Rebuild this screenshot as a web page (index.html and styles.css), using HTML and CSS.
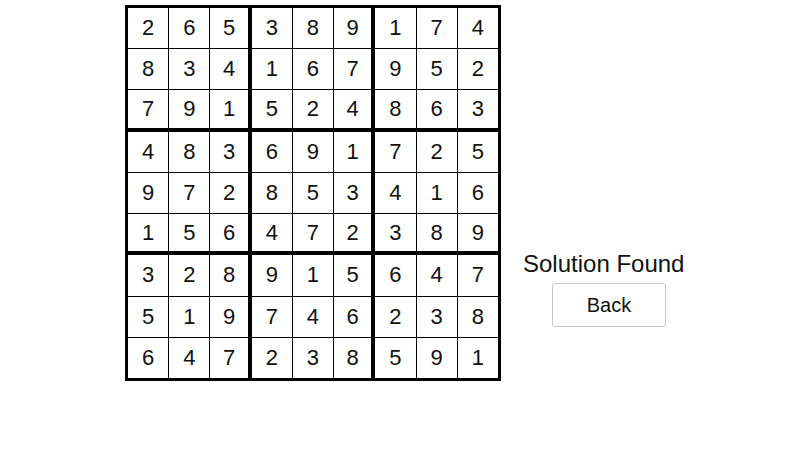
FILE: index.html
```html
<!DOCTYPE html>
<html>
<head>
<meta charset="utf-8">
<link rel="stylesheet" href="styles.css">
</head>
<body>
<div class="page">
  <div class="board">
    <div class="cell">2</div><div class="cell">6</div><div class="cell">5</div><div class="cell">3</div><div class="cell">8</div><div class="cell">9</div><div class="cell">1</div><div class="cell">7</div><div class="cell">4</div>
    <div class="cell">8</div><div class="cell">3</div><div class="cell">4</div><div class="cell">1</div><div class="cell">6</div><div class="cell">7</div><div class="cell">9</div><div class="cell">5</div><div class="cell">2</div>
    <div class="cell">7</div><div class="cell">9</div><div class="cell">1</div><div class="cell">5</div><div class="cell">2</div><div class="cell">4</div><div class="cell">8</div><div class="cell">6</div><div class="cell">3</div>
    <div class="cell">4</div><div class="cell">8</div><div class="cell">3</div><div class="cell">6</div><div class="cell">9</div><div class="cell">1</div><div class="cell">7</div><div class="cell">2</div><div class="cell">5</div>
    <div class="cell">9</div><div class="cell">7</div><div class="cell">2</div><div class="cell">8</div><div class="cell">5</div><div class="cell">3</div><div class="cell">4</div><div class="cell">1</div><div class="cell">6</div>
    <div class="cell">1</div><div class="cell">5</div><div class="cell">6</div><div class="cell">4</div><div class="cell">7</div><div class="cell">2</div><div class="cell">3</div><div class="cell">8</div><div class="cell">9</div>
    <div class="cell">3</div><div class="cell">2</div><div class="cell">8</div><div class="cell">9</div><div class="cell">1</div><div class="cell">5</div><div class="cell">6</div><div class="cell">4</div><div class="cell">7</div>
    <div class="cell">5</div><div class="cell">1</div><div class="cell">9</div><div class="cell">7</div><div class="cell">4</div><div class="cell">6</div><div class="cell">2</div><div class="cell">3</div><div class="cell">8</div>
    <div class="cell">6</div><div class="cell">4</div><div class="cell">7</div><div class="cell">2</div><div class="cell">3</div><div class="cell">8</div><div class="cell">5</div><div class="cell">9</div><div class="cell">1</div>
  </div>
  <div class="side">
    <div class="status">Solution Found</div>
    <button class="back">Back</button>
  </div>
</div>
</body>
</html>
```
FILE: styles.css
```css
html, body {
  margin: 0;
  padding: 0;
  background: #ffffff;
}
body {
  width: 800px;
  height: 450px;
  overflow: hidden;
  font-family: "Liberation Sans", Arial, sans-serif;
  color: #111111;
}
.page {
  display: flex;
  align-items: flex-start;
  padding: 5px 0 0 125px;
  gap: 22px;
}
.board {
  box-sizing: border-box;
  width: 376px;
  height: 376px;
  background: #000000;
  padding: 3px;
  display: grid;
  grid-template-columns: repeat(9, 1fr);
  grid-template-rows: repeat(9, 1fr);
  gap: 1px;
}
.cell {
  background: #ffffff;
  box-sizing: border-box;
  display: flex;
  align-items: center;
  justify-content: center;
  font-size: 22px;
  color: #111111;
}
.cell:nth-child(9n+3),
.cell:nth-child(9n+6) {
  border-right: 3px solid #000000;
}
.cell:nth-child(n+19):nth-child(-n+27),
.cell:nth-child(n+46):nth-child(-n+54) {
  border-bottom: 3px solid #000000;
}
.side {
  display: flex;
  flex-direction: column;
  align-items: flex-start;
  margin-top: 245px;
}
.status {
  font-size: 24px;
  line-height: 28px;
  color: #111111;
}
.back {
  margin: 5px 0 0 29px;
  width: 114px;
  height: 44px;
  background: #ffffff;
  border: 1px solid #c8c8c8;
  border-radius: 3px;
  font-family: "Liberation Sans", Arial, sans-serif;
  font-size: 20px;
  color: #111111;
  padding: 0;
}
```
